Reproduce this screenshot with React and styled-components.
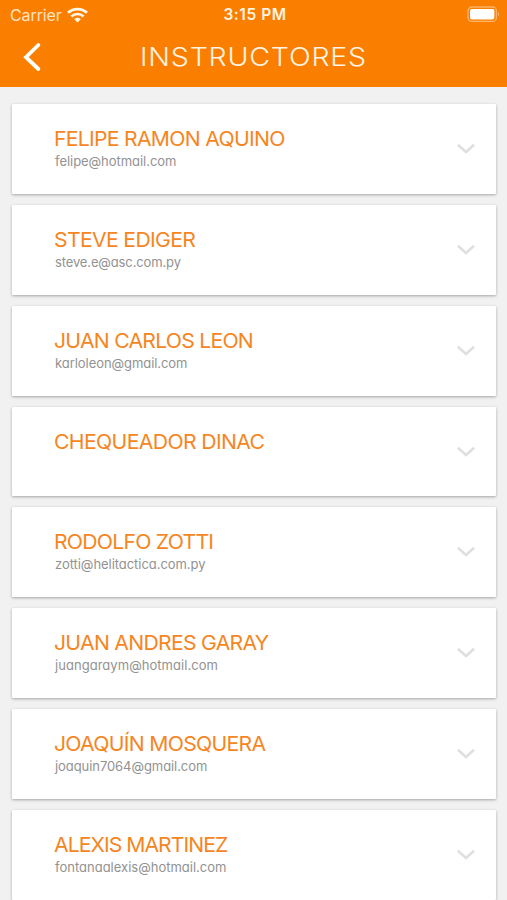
import React from 'react';
import styled, { createGlobalStyle } from 'styled-components';

const GlobalStyle = createGlobalStyle`
  * { box-sizing: border-box; }
  body { margin: 0; background: #f1f1f1; font-family: Inter, sans-serif; }
`;

const Screen = styled.div`
  height: 900px;
  overflow: hidden;
  background: #f1f1f1;
`;

const Header = styled.header`
  height: 87px;
  background: #fa7f00;
  color: #fff3e2;
`;

const StatusBar = styled.div`
  display: grid;
  grid-template-columns: 1fr auto 1fr;
  align-items: center;
  height: 29px;
  padding: 0 7px 0 10px;
`;

const Carrier = styled.div`
  display: flex;
  align-items: center;
  gap: 5px;
  font-size: 16px;
  letter-spacing: -0.1px;
  color: #ffe3c2;
`;

const Clock = styled.time`
  font-size: 15.5px;
  font-weight: 600;
  letter-spacing: 0.55px;
`;

const Battery = styled.svg`
  justify-self: end;
`;

const NavBar = styled.div`
  display: grid;
  grid-template-columns: 64px 1fr 64px;
  align-items: center;
  height: 56px;
`;

const BackButton = styled.button`
  display: flex;
  padding: 0 0 0 22px;
  border: 0;
  background: none;
`;

const Title = styled.h1`
  margin: 0;
  text-align: center;
  font-size: 25.5px;
  font-weight: 300;
  line-height: 30px;
  letter-spacing: 0.7px;
  transform: scaleX(1.12);
`;

const List = styled.main`
  display: flex;
  flex-direction: column;
  gap: 11px;
  padding: 17px 11px 0 12px;
`;

const Card = styled.article`
  flex: none;
  display: flex;
  justify-content: space-between;
  height: ${({ $compact }) => ($compact ? 89 : 90)}px;
  padding: 23px 20px 0 42px;
  background: #fff;
  border-radius: 1px;
  box-shadow: 0 1px 3px rgba(0, 0, 0, 0.32);
`;

const Person = styled.div`
  font-feature-settings: 'cv11' 1;
  white-space: nowrap;
`;

const Name = styled.h2`
  margin: 0;
  font-size: 20px;
  font-weight: 400;
  line-height: 24px;
  letter-spacing: ${({ $tracking = 0 }) => -0.69 + $tracking}px;
  transform: scaleX(1.06);
  transform-origin: left;
  color: #f5861f;
`;

const Email = styled.div`
  padding-left: 1px;
  font-size: 13px;
  line-height: 21px;
  letter-spacing: ${({ $tracking = 0 }) => $tracking}px;
  color: #929292;
`;

const Chevron = styled.svg`
  margin-top: 15px;
`;

const instructors = [
  { name: 'FELIPE RAMON AQUINO', email: 'felipe@hotmail.com', emailTracking: -0.04 },
  { name: 'STEVE EDIGER', nameTracking: 0.06, email: 'steve.e@asc.com.py', emailTracking: -0.13 },
  { name: 'JUAN CARLOS LEON', nameTracking: -0.04, email: 'karloleon@gmail.com', emailTracking: -0.06 },
  { name: 'CHEQUEADOR DINAC', nameTracking: 0.08, email: '' },
  { name: 'RODOLFO ZOTTI', nameTracking: -0.04, email: 'zotti@helitactica.com.py', emailTracking: -0.05 },
  { name: 'JUAN ANDRES GARAY', email: 'juangaraym@hotmail.com', emailTracking: 0.04 },
  { name: 'JOAQUÍN MOSQUERA', email: 'joaquin7064@gmail.com', emailTracking: -0.07 },
  { name: 'ALEXIS MARTINEZ', nameTracking: -0.23, email: 'fontanaalexis@hotmail.com' },
];

function WifiIcon() {
  return (
    <svg width="21" height="16" viewBox="0 0 21 16" fill="none" stroke="#fff6e8">
      <path d="M1 5.8C6.4 0.8 14.6 0.8 20 5.8" strokeWidth="2.8" />
      <path d="M4.4 9.4C7.9 6.2 13.1 6.2 16.6 9.4" strokeWidth="2.7" />
      <path d="M7.2 12.2C9.1 10.4 11.9 10.4 13.8 12.2L10.5 15.4Z" fill="#fff6e8" stroke="none" />
    </svg>
  );
}

function BatteryIcon() {
  return (
    <Battery width="33" height="17" viewBox="0 0 33 17">
      <rect x="1" y="1" width="28.4" height="14.4" rx="4" fill="none" stroke="#ffb469" strokeWidth="1.3" />
      <rect x="3" y="3" width="24.4" height="10.4" rx="1.8" fill="#fff" />
      <path d="M31 6Q33.2 8.2 31 10.4Z" fill="#ffb469" />
    </Battery>
  );
}

export default function App() {
  return (
    <>
      <GlobalStyle />
      <Screen>
        <Header>
          <StatusBar>
            <Carrier>
              Carrier
              <WifiIcon />
            </Carrier>
            <Clock>3:15 PM</Clock>
            <BatteryIcon />
          </StatusBar>
          <NavBar>
            <BackButton aria-label="Volver">
              <svg width="20" height="30" viewBox="0 0 20 30" fill="none" stroke="#fff" strokeWidth="3.8" strokeLinecap="round">
                <path d="M16.4 3L4 15.2L16.4 27" />
              </svg>
            </BackButton>
            <Title>INSTRUCTORES</Title>
          </NavBar>
        </Header>
        <List>
          {instructors.map(({ name, email, nameTracking, emailTracking }) => (
            <Card key={name} $compact={!email}>
              <Person>
                <Name $tracking={nameTracking}>{name}</Name>
                {email && <Email $tracking={emailTracking}>{email}</Email>}
              </Person>
              <Chevron width="20" height="14" viewBox="0 0 20 14" fill="none" stroke="#dfdfdf" strokeWidth="2.5">
                <path d="M1.9 2.7L10 10L18.1 2.7" />
              </Chevron>
            </Card>
          ))}
        </List>
      </Screen>
    </>
  );
}
